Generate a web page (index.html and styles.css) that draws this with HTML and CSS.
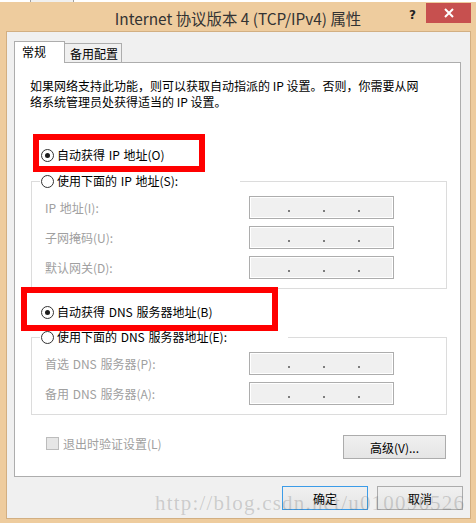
FILE: index.html
```html
<!DOCTYPE html>
<html lang="zh-CN">
<head>
    <meta charset="UTF-8">
    <meta name="viewport" content="width=device-width, initial-scale=1.0">
    <title>Internet 协议版本 4 (TCP/IPv4) 属性</title>
    <link rel="stylesheet" href="styles.css">
</head>
<body>
    <!-- край окна позади -->
    <div class="desk-strip">
        <span class="strip-a"></span>
        <span class="strip-b"></span>
    </div>

    <div class="window">
        <div class="titlebar">
            <div></div>
            <div class="title">Internet 协议版本 4 (TCP/IPv4) 属性</div>
            <div class="controls">
                <span class="help">?</span>
                <button class="close" aria-label="关闭">
                    <svg width="10" height="10" viewBox="0 0 10 10">
                        <path d="M1 1 L9 9 M9 1 L1 9" stroke="#fff" stroke-width="2" fill="none"/>
                    </svg>
                </button>
            </div>
        </div>

        <div class="client">
            <div class="tabs">
                <div class="tab active">常规</div>
                <div class="tab">备用配置</div>
            </div>

            <div class="panel">
                <p class="intro">如果网络支持此功能，则可以获取自动指派的 IP 设置。否则，你需要从网<br>络系统管理员处获得适当的 IP 设置。</p>

                <label class="option">
                    <input type="radio" name="ip" checked>
                    <span>自动获得 IP 地址(O)</span>
                </label>

                <fieldset class="group">
                    <legend class="legend-ip">
                        <label class="option">
                            <input type="radio" name="ip">
                            <span>使用下面的 IP 地址(S):</span>
                        </label>
                    </legend>
                    <div class="rows">
                        <div class="row">
                            <span class="field-label">IP 地址(I):</span>
                            <div class="ipbox"><i></i><i></i><i></i></div>
                        </div>
                        <div class="row">
                            <span class="field-label">子网掩码(U):</span>
                            <div class="ipbox"><i></i><i></i><i></i></div>
                        </div>
                        <div class="row">
                            <span class="field-label">默认网关(D):</span>
                            <div class="ipbox"><i></i><i></i><i></i></div>
                        </div>
                    </div>
                </fieldset>

                <label class="option dns-auto">
                    <input type="radio" name="dns" checked>
                    <span>自动获得 DNS 服务器地址(B)</span>
                </label>

                <fieldset class="group group-dns">
                    <legend class="legend-dns">
                        <label class="option">
                            <input type="radio" name="dns">
                            <span>使用下面的 DNS 服务器地址(E):</span>
                        </label>
                    </legend>
                    <div class="rows">
                        <div class="row">
                            <span class="field-label">首选 DNS 服务器(P):</span>
                            <div class="ipbox"><i></i><i></i><i></i></div>
                        </div>
                        <div class="row">
                            <span class="field-label">备用 DNS 服务器(A):</span>
                            <div class="ipbox"><i></i><i></i><i></i></div>
                        </div>
                    </div>
                </fieldset>

                <div class="bottom-row">
                    <label class="check">
                        <span class="checkbox"></span>
                        <span>退出时验证设置(L)</span>
                    </label>
                    <button class="btn btn-advanced">高级(V)...</button>
                </div>

                <!-- красные рамки-пометки поверх -->
                <div class="mark mark-ip"></div>
                <div class="mark mark-dns"></div>
            </div>

            <div class="actions">
                <button class="btn btn-default">确定</button>
                <button class="btn">取消</button>
            </div>
        </div>

        <div class="watermark">http://blog.csdn.net/u010096526</div>
    </div>
</body>
</html>
```

FILE: styles.css
```css
* {
    box-sizing: border-box;
}

body {
    margin: 0;
    width: 476px;
    height: 523px;
    overflow: hidden;
    font-family: "Noto Sans CJK SC", "Noto Sans", sans-serif;
    font-size: 12px;
    color: #000;
    background: #eecc9e;
}

.desk-strip {
    height: 2px;
    display: flex;
    background: #fff;
}

.strip-a {
    width: 30px;
}

.strip-b {
    width: 44px;
    background: #f0f0f0;
    border-left: 1px solid #a0a0a0;
    border-right: 1px solid #a0a0a0;
}

.window {
    position: relative;
    background: #eecc9e;
    padding: 0 5px 4px 6px;
}

.titlebar {
    height: 29px;
    margin: 0 -5px 0 -6px;
    display: grid;
    grid-template-columns: 1fr auto 1fr;
}

.title {
    font-size: 15.4px;
    line-height: 20px;
    margin-top: 6px;
    color: #333;
    white-space: nowrap;
}

.controls {
    display: flex;
    justify-content: flex-end;
    align-items: flex-start;
}

.help {
    font-family: "DejaVu Sans", sans-serif;
    font-weight: bold;
    font-size: 12px;
    line-height: 14px;
    margin-top: 6px;
    margin-right: 10px;
    color: #222;
}

.close {
    width: 45px;
    height: 20px;
    margin: 1px 5px 0 0;
    padding: 0;
    border: none;
    background: #c7504f;
    display: flex;
    align-items: center;
    justify-content: center;
}

.client {
    border: 1px solid #d2af82;
    background: #f0f0f0;
    padding: 9px 9px 8px 7px;
}

.tabs {
    display: flex;
    align-items: flex-end;
    height: 21px;
}

.tab {
    height: 19px;
    line-height: 18px;
    padding: 1px 0 0 5px;
    width: 57px;
    border: 1px solid #adadad;
    border-left: none;
    border-bottom: none;
    background: #f0f0f0;
}

.tab.active {
    position: relative;
    z-index: 1;
    width: 51px;
    height: 22px;
    margin-bottom: -1px;
    padding: 1px 0 0 7px;
    border-left: 1px solid #adadad;
    background: #fff;
}

.panel {
    position: relative;
    background: #fff;
    border: 1px solid #adadad;
    padding: 0 13px 17px 16px;
}

.intro {
    margin: 15px 0 0 -1px;
    line-height: 16px;
}

.option {
    display: flex;
    align-items: center;
    gap: 3px;
    height: 16px;
    line-height: 16px;
    white-space: nowrap;
    word-spacing: 1px;
}

.panel > .option {
    margin-top: 37px;
    padding-left: 10px;
}

.panel > .dns-auto {
    margin-top: 15px;
}

.option input {
    appearance: none;
    margin: 0;
    width: 13px;
    height: 13px;
    border: 1px solid #333;
    border-radius: 50%;
    background: #fff;
    display: grid;
    place-items: center;
}

.option input:checked::after {
    content: "";
    width: 5px;
    height: 5px;
    border-radius: 50%;
    background: #1c1c1c;
}

.group {
    margin: 10px 0 0;
    padding: 7px 0 9px;
    border: 1px solid #dcdcdc;
    min-width: 0;
}

.group-dns {
    margin-top: 9px;
}

.group legend {
    padding: 0 0 0 1px;
    margin-left: 8px;
}

.legend-ip {
    width: 200px;
}

.legend-dns {
    width: 248px;
}

.rows {
    display: flex;
    flex-direction: column;
    gap: 7px;
    padding-left: 13px;
}

.row {
    display: grid;
    grid-template-columns: 204px 145px;
    align-items: center;
    word-spacing: 1px;
}

.field-label {
    color: #a0a0a0;
}

.ipbox {
    height: 23px;
    border: 1px solid #adadad;
    box-shadow: inset 0 0 0 1px #fff;
    background: #f0f0f0;
    display: flex;
    align-items: flex-start;
    gap: 33px;
    padding: 13px 0 0 38px;
}

.ipbox i {
    width: 2px;
    height: 2px;
    background: #7d7d7d;
}

.bottom-row {
    margin-top: 20px;
    display: flex;
    justify-content: space-between;
    align-items: flex-start;
}

.check {
    display: flex;
    align-items: center;
    gap: 4px;
    margin-top: 1px;
    padding-left: 15px;
    height: 14px;
    color: #a0a0a0;
}

.checkbox {
    width: 13px;
    height: 13px;
    border: 1px solid #bcbcbc;
    background: #e6e6e6;
}

.btn {
    font-family: inherit;
    font-size: 12px;
    color: #000;
    height: 24px;
    width: 86px;
    padding: 0;
    border: 1px solid #acacac;
    background: linear-gradient(#f0f0f0, #e5e5e5);
}

.btn-advanced {
    width: 103px;
    margin-right: 1px;
}

.btn-default {
    border-color: #3c9ce8;
}

.actions {
    margin: 9px -2px 0 0;
    display: flex;
    justify-content: flex-end;
    gap: 9px;
}

.mark {
    position: absolute;
    border: 6px solid #ff0000;
}

.mark-ip {
    left: 18px;
    top: 71px;
    width: 172px;
    height: 38px;
}

.mark-dns {
    left: 6px;
    top: 224px;
    width: 257px;
    height: 44px;
}

.watermark {
    position: absolute;
    left: 155px;
    top: 491px;
    font-family: "Liberation Serif", serif;
    font-size: 21px;
    line-height: 21px;
    letter-spacing: 1.2px;
    color: rgba(110, 110, 110, 0.28);
    white-space: nowrap;
    pointer-events: none;
}
```
